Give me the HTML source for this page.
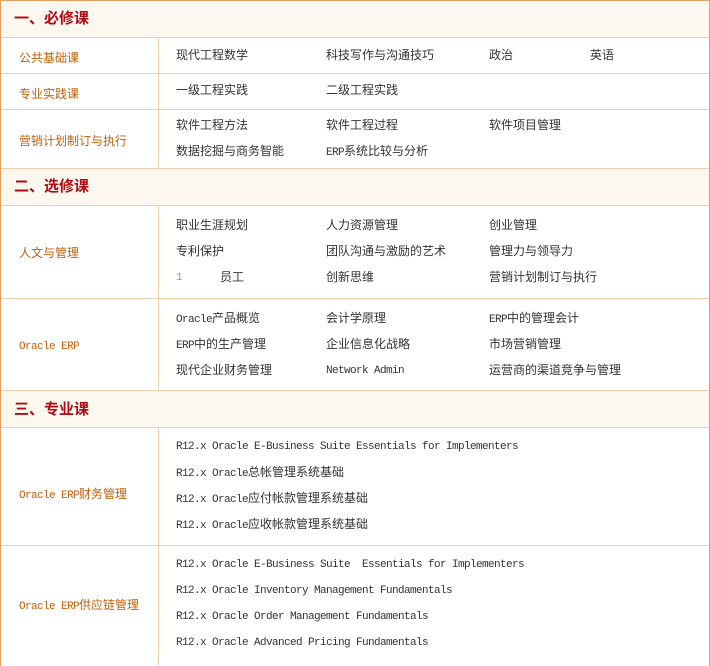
<!DOCTYPE html>
<html><head><meta charset="utf-8"><style>
body{margin:0;width:710px;height:665px;overflow:hidden;background:#fff;font-family:"Liberation Mono","Noto Sans CJK SC",monospace;font-size:12px;color:#333;position:relative}
.t{position:absolute;line-height:16px;white-space:pre}
.m{font-size:11px;letter-spacing:-0.6px}
.h{position:absolute;left:1px;right:1px;background:#fcf7ef}
.hl{position:absolute;left:1px;right:1px;height:1px;background:#efcfb0}
.vl{position:absolute;left:158px;width:1px;background:#efcfb0}
.ht{position:absolute;left:14px;font-size:15px;font-weight:bold;color:#b00a14;line-height:18px;font-family:"Liberation Sans","Noto Sans CJK SC",sans-serif}
.lb{position:absolute;left:19px;color:#c0600a;line-height:16px;white-space:pre}
</style></head><body>
<div style="position:absolute;left:0;top:0;width:708px;height:665px;border:1px solid #e0a060;border-bottom:none"></div>
<div class="h" style="top:1px;height:36px"></div>
<div class="h" style="top:169px;height:36px"></div>
<div class="h" style="top:391px;height:36px"></div>
<div class="hl" style="top:37px"></div><div class="hl" style="top:73px"></div><div class="hl" style="top:109px"></div>
<div class="hl" style="top:168px"></div><div class="hl" style="top:205px"></div><div class="hl" style="top:298px"></div>
<div class="hl" style="top:390px"></div><div class="hl" style="top:427px"></div><div class="hl" style="top:545px"></div>
<div class="vl" style="top:37px;height:131px"></div>
<div class="vl" style="top:205px;height:185px"></div>
<div class="vl" style="top:427px;height:238px"></div>
<div class="ht" style="top:10px">一、必修课</div>
<div class="ht" style="top:178px">二、选修课</div>
<div class="ht" style="top:401px">三、专业课</div>
<div class="lb" style="top:51px">公共基础课</div>
<div class="lb" style="top:87px">专业实践课</div>
<div class="lb" style="top:134px">营销计划制订与执行</div>
<div class="lb" style="top:246px">人文与管理</div>
<div class="lb m" style="top:339px">Oracle ERP</div>
<div class="lb" style="top:487px"><span class="m">Oracle ERP</span>财务管理</div>
<div class="lb" style="top:598px"><span class="m">Oracle ERP</span>供应链管理</div>
<div class="t" style="left:176px;top:48px">现代工程数学</div><div class="t" style="left:326px;top:48px">科技写作与沟通技巧</div><div class="t" style="left:489px;top:48px">政治</div><div class="t" style="left:590px;top:48px">英语</div>
<div class="t" style="left:176px;top:83px">一级工程实践</div><div class="t" style="left:326px;top:83px">二级工程实践</div>
<div class="t" style="left:176px;top:118px">软件工程方法</div><div class="t" style="left:326px;top:118px">软件工程过程</div><div class="t" style="left:489px;top:118px">软件项目管理</div>
<div class="t" style="left:176px;top:144px">数据挖掘与商务智能</div><div class="t" style="left:326px;top:144px"><span class="m">ERP</span>系统比较与分析</div>
<div class="t" style="left:176px;top:218px">职业生涯规划</div><div class="t" style="left:326px;top:218px">人力资源管理</div><div class="t" style="left:489px;top:218px">创业管理</div>
<div class="t" style="left:176px;top:244px">专利保护</div><div class="t" style="left:326px;top:244px">团队沟通与激励的艺术</div><div class="t" style="left:489px;top:244px">管理力与领导力</div>
<div class="t m" style="left:176px;top:270px;color:#999">1</div><div class="t" style="left:220px;top:270px">员工</div><div class="t" style="left:326px;top:270px">创新思维</div><div class="t" style="left:489px;top:270px">营销计划制订与执行</div>
<div class="t" style="left:176px;top:311px"><span class="m">Oracle</span>产品概览</div><div class="t" style="left:326px;top:311px">会计学原理</div><div class="t" style="left:489px;top:311px"><span class="m">ERP</span>中的管理会计</div>
<div class="t" style="left:176px;top:337px"><span class="m">ERP</span>中的生产管理</div><div class="t" style="left:326px;top:337px">企业信息化战略</div><div class="t" style="left:489px;top:337px">市场营销管理</div>
<div class="t" style="left:176px;top:363px">现代企业财务管理</div><div class="t m" style="left:326px;top:363px">Network Admin</div><div class="t" style="left:489px;top:363px">运营商的渠道竞争与管理</div>
<div class="t m" style="left:176px;top:439px">R12.x Oracle E-Business Suite Essentials for Implementers</div>
<div class="t" style="left:176px;top:465px"><span class="m">R12.x Oracle</span>总帐管理系统基础</div>
<div class="t" style="left:176px;top:491px"><span class="m">R12.x Oracle</span>应付帐款管理系统基础</div>
<div class="t" style="left:176px;top:517px"><span class="m">R12.x Oracle</span>应收帐款管理系统基础</div>
<div class="t m" style="left:176px;top:557px">R12.x Oracle E-Business Suite  Essentials for Implementers</div>
<div class="t m" style="left:176px;top:583px">R12.x Oracle Inventory Management Fundamentals</div>
<div class="t m" style="left:176px;top:609px">R12.x Oracle Order Management Fundamentals</div>
<div class="t m" style="left:176px;top:635px">R12.x Oracle Advanced Pricing Fundamentals</div>
</body></html>
